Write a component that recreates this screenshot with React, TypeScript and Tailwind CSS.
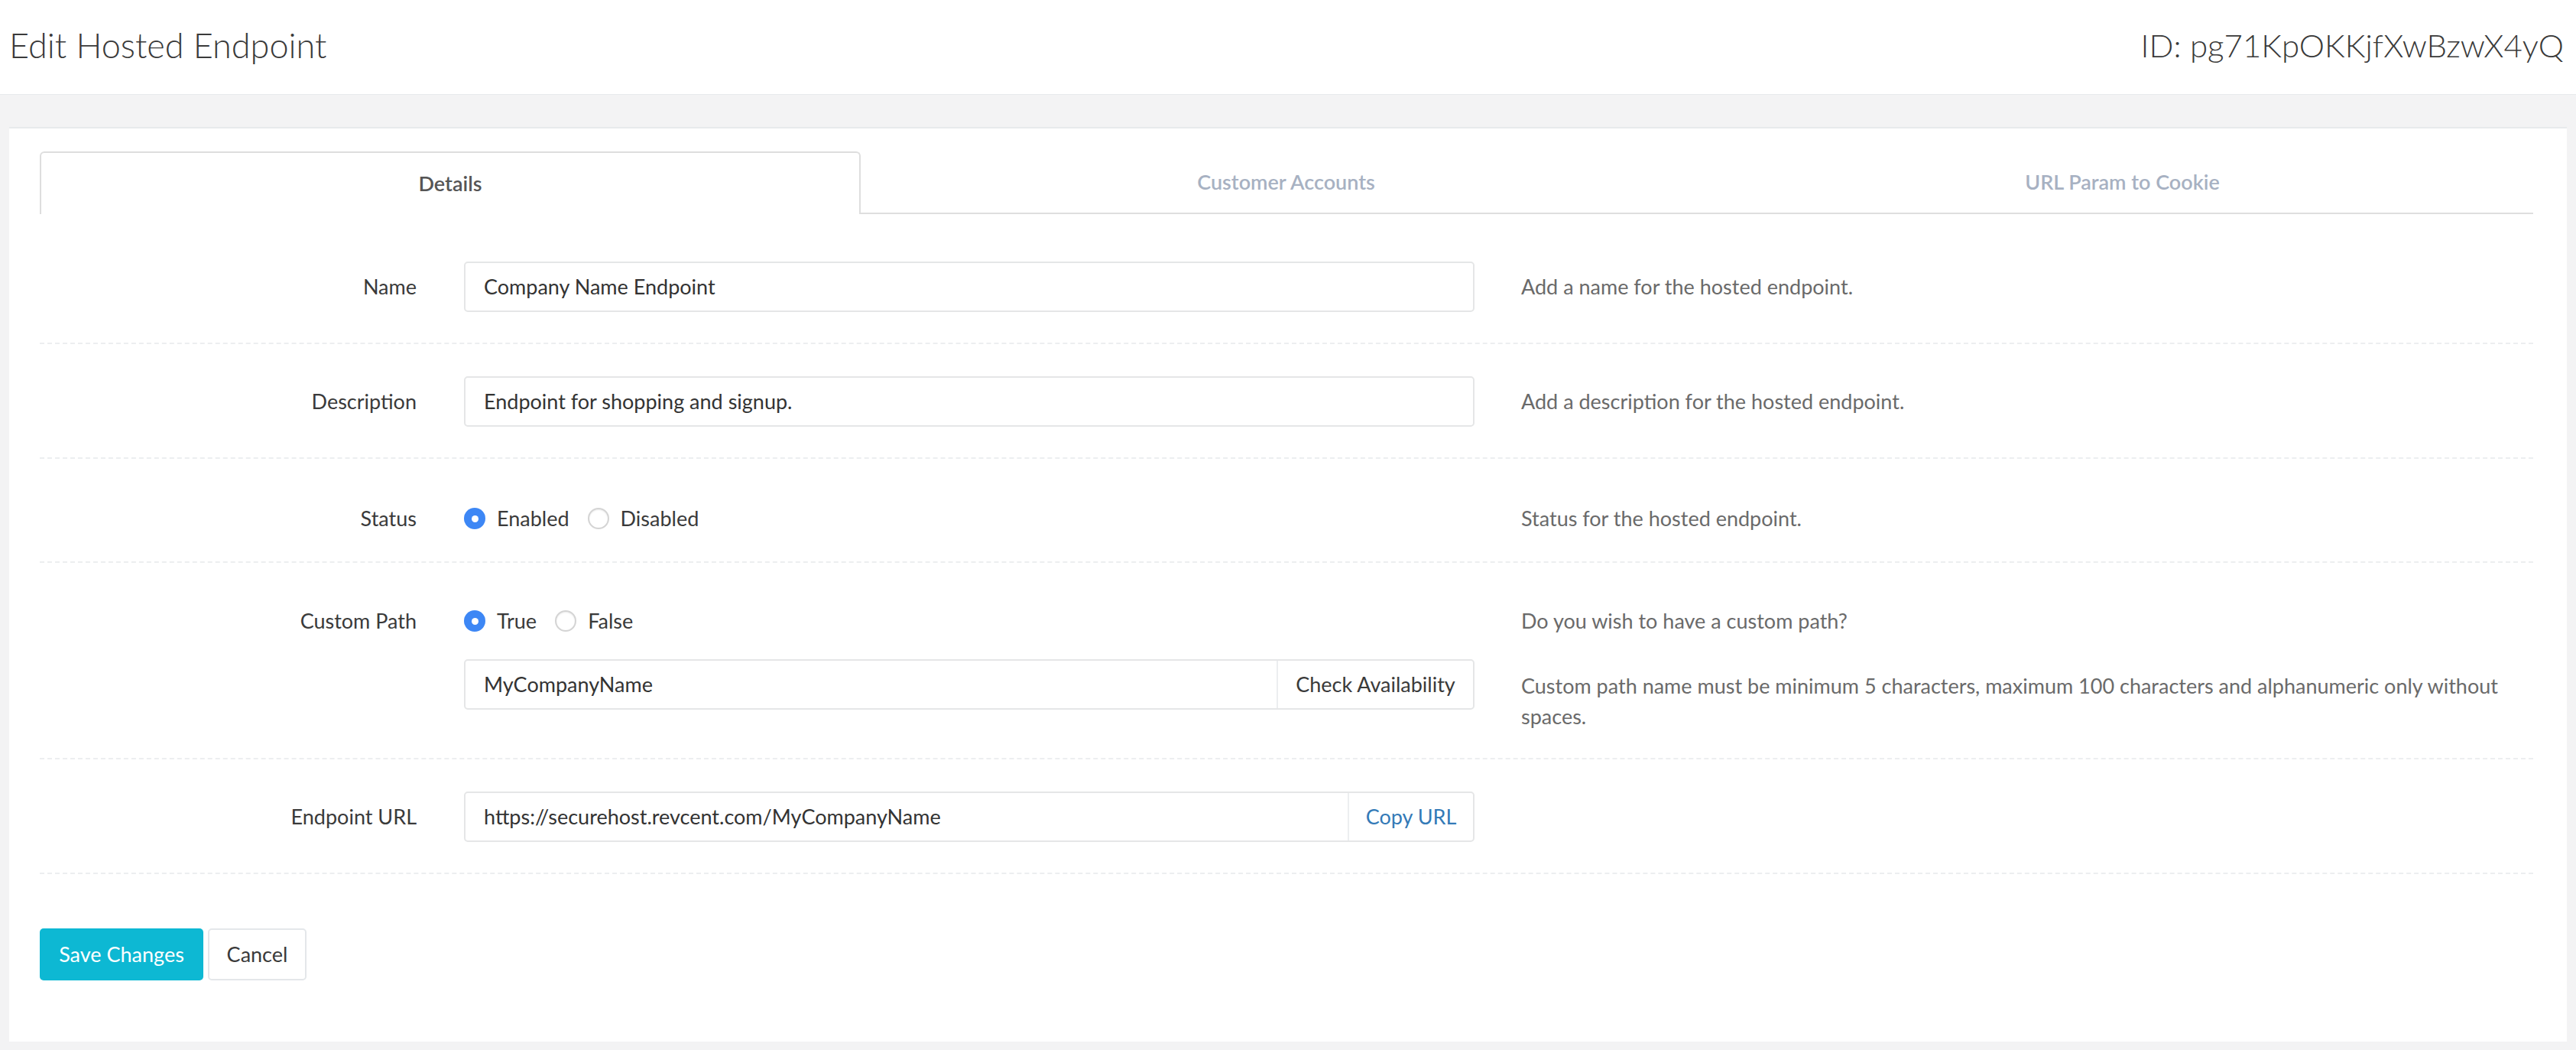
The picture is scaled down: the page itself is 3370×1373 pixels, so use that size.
import React from "react";

const font = { fontFamily: "Lato, 'Open Sans', sans-serif" };

function Radio({ checked, label }: { checked: boolean; label: string }) {
  return (
    <span className="flex items-center">
      {checked ? (
        <span className="flex h-[28px] w-[28px] items-center justify-center rounded-full bg-[#3d87f5]">
          <span className="h-[9px] w-[9px] rounded-full bg-white" />
        </span>
      ) : (
        <span className="h-[28px] w-[28px] rounded-full border-2 border-[#d4d4d4] bg-white shadow-[inset_0_1px_2px_rgba(0,0,0,0.08)]" />
      )}
      <span className="ml-[15px] text-[#3a3a3a]">{label}</span>
    </span>
  );
}

function Row({
  label,
  children,
  help,
  className,
}: {
  label: string;
  children: React.ReactNode;
  help?: React.ReactNode;
  className: string;
}) {
  return (
    <div className={"flex border-b-2 border-dashed border-[#eceef0] " + className}>
      <div className="w-[555px] shrink-0 pr-[62px] text-right text-[#3a3a3a]">{label}</div>
      <div className="w-[1322px] shrink-0">{children}</div>
      <div className="flex-1 pl-[61px] text-[#6a6a6a]">{help}</div>
    </div>
  );
}

export default function App() {
  return (
    <div className="min-h-screen w-[3370px] bg-[#f3f3f4] text-[27px]" style={font}>
      <header className="flex h-[124px] items-center justify-between border-b border-[#e7eaec] bg-white pl-[12px] pr-[16px] pb-[4px]">
        <h1 className="text-[45px] font-light text-[#3a3a3a]">Edit Hosted Endpoint</h1>
        <div className="text-[42px] font-light text-[#3a3a3a]">ID: pg71KpOKKjfXwBzwX4yQ</div>
      </header>
      <main className="px-[12px] pt-[42px] pb-[11px]">
        <div className="border-t-2 border-[#e7eaec] bg-white px-[40px] pt-[30px] pb-[80px]">
          <div className="flex h-[82px] w-[3262px]">
            <div className="flex w-[1074px] items-center justify-center rounded-t-[6px] border-2 border-b-0 border-[#dedede] font-semibold text-[#555]">
              Details
            </div>
            <div className="flex w-[1113px] items-center justify-center border-b-2 border-[#dedede] font-semibold text-[#a7b1c2]">
              Customer Accounts
            </div>
            <div className="flex w-[1075px] items-center justify-center border-b-2 border-[#dedede] font-semibold text-[#a7b1c2]">
              URL Param to Cookie
            </div>
          </div>

          <div className="mt-[20px] w-[3262px]">
            <Row
              label="Name"
              className="items-center pt-[42px] pb-[40px]"
              help="Add a name for the hosted endpoint."
            >
              <div className="flex h-[66px] items-center rounded-[5px] border-2 border-[#e5e6e7] px-[24px] text-[#333]">
                Company Name Endpoint
              </div>
            </Row>
            <Row
              label="Description"
              className="items-center pt-[42px] pb-[40px]"
              help="Add a description for the hosted endpoint."
            >
              <div className="flex h-[66px] items-center rounded-[5px] border-2 border-[#e5e6e7] px-[24px] text-[#333]">
                Endpoint for shopping and signup.
              </div>
            </Row>
            <Row
              label="Status"
              className="items-center pt-[56px] pb-[34px] leading-[44px]"
              help="Status for the hosted endpoint."
            >
              <div className="flex h-[44px] items-center gap-[24px]">
                <Radio checked label="Enabled" />
                <Radio checked={false} label="Disabled" />
              </div>
            </Row>
            <Row
              label="Custom Path"
              className="items-start pt-[54px] pb-[34px] leading-[44px]"
              help={
                <div className="leading-[40px]">
                  <p className="pt-[2px]">Do you wish to have a custom path?</p>
                  <p className="mt-[45px] pr-[40px]">
                    Custom path name must be minimum 5 characters, maximum 100 characters and alphanumeric only without
                    spaces.
                  </p>
                </div>
              }
            >
              <div>
                <div className="flex h-[44px] items-center gap-[24px]">
                  <Radio checked label="True" />
                  <Radio checked={false} label="False" />
                </div>
                <div className="mt-[28px] flex h-[66px] rounded-[5px] border-2 border-[#e5e6e7] text-[#333]">
                  <div className="flex flex-1 items-center px-[24px]">MyCompanyName</div>
                  <div className="flex w-[257px] items-center justify-center border-l-2 border-[#eceef0] text-[#3a3a3a]">
                    Check Availability
                  </div>
                </div>
              </div>
            </Row>
            <Row label="Endpoint URL" className="items-center pt-[42px] pb-[40px]" help={null}>
              <div className="flex h-[66px] rounded-[5px] border-2 border-[#e5e6e7] text-[#333]">
                <div className="flex flex-1 items-center px-[24px]">https://securehost.revcent.com/MyCompanyName</div>
                <div className="flex w-[164px] items-center justify-center border-l-2 border-[#eceef0] text-[#337ab7]">
                  Copy URL
                </div>
              </div>
            </Row>
          </div>

          <div className="mt-[71px] flex gap-[6px]">
            <button className="h-[68px] w-[214px] rounded-[5px] bg-[#0db8d3] text-white">Save Changes</button>
            <button className="h-[68px] w-[129px] rounded-[5px] border-2 border-[#e4e7ea] bg-white text-[#3a3a3a]">
              Cancel
            </button>
          </div>
        </div>
      </main>
    </div>
  );
}
